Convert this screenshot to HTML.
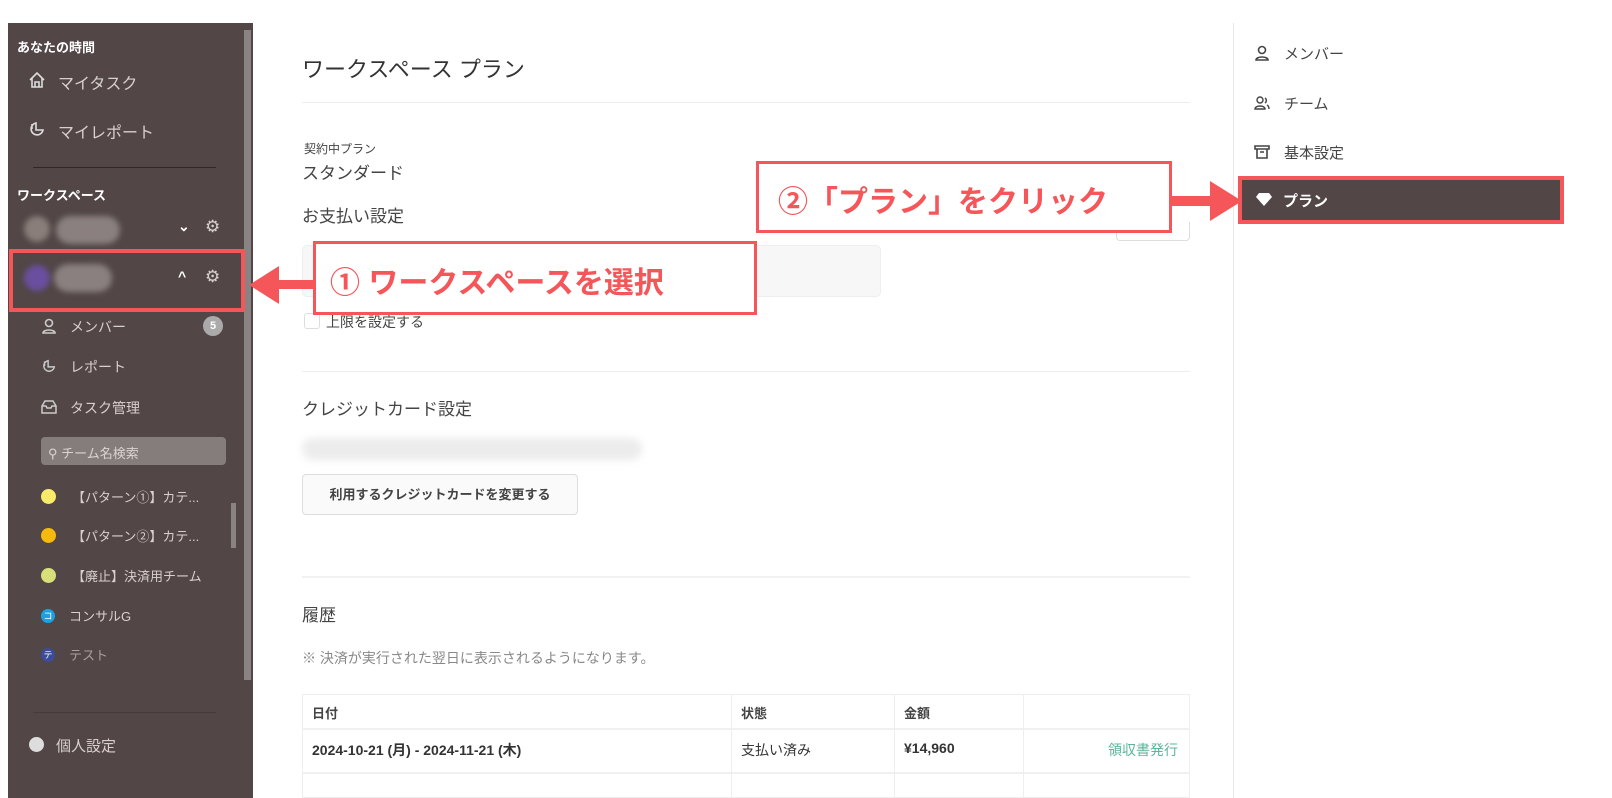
<!DOCTYPE html>
<html><head><meta charset="utf-8"><style>
*{margin:0;padding:0;box-sizing:border-box}
body{width:1612px;height:798px;background:#fff;position:relative;overflow:hidden;font-family:"Liberation Sans","Noto Sans CJK JP",sans-serif;color:#333}
.a{position:absolute;white-space:nowrap}
#sb{position:absolute;left:8px;top:23px;width:245px;height:775px;background:#524646}
.sw{color:#fff}
.sl{color:#d8d0cf}
.red{border:4px solid #f5565a}
</style></head><body>
<div id="sb"></div>
<div class="a" style="left:244px;top:30px;width:7px;height:650px;background:#8a8383"></div>
<div class="a sw" style="left:17px;top:37px;font-size:13px;font-weight:bold">あなたの時間</div>
<svg class="a" style="left:28px;top:71px" width="18" height="18" viewBox="0 0 18 18" fill="none" stroke="#ddd" stroke-width="1.6"><path d="M2 9L9 2l7 7M4 7v9h10V7M7 16v-5h4v5"/></svg>
<div class="a sl" style="left:58px;top:70px;font-size:16px">マイタスク</div>
<svg class="a" style="left:28px;top:120px" width="18" height="18" viewBox="0 0 18 18" fill="none" stroke="#ddd" stroke-width="1.6"><path d="M8 3a6 6 0 1 0 7 7H8zM4 4v5"/></svg>
<div class="a sl" style="left:58px;top:119px;font-size:16px">マイレポート</div>
<div class="a" style="left:33px;top:167px;width:183px;height:1px;background:#2f2828"></div>
<div class="a sw" style="left:17px;top:185px;font-size:13px;font-weight:bold">ワークスペース</div>
<div class="a" style="left:24px;top:216px;width:26px;height:26px;border-radius:50%;background:#8a7e7a;filter:blur(3px)"></div>
<div class="a" style="left:56px;top:216px;width:64px;height:28px;border-radius:14px;background:#8a8080;filter:blur(3px)"></div>
<div class="a sw" style="left:178px;top:218px;font-size:14px;font-weight:bold">⌄</div>
<div class="a sl" style="left:205px;top:217px;font-size:17px">⚙</div>
<div class="a" style="left:24px;top:265px;width:26px;height:26px;border-radius:50%;background:#6a4fa0;filter:blur(3px)"></div>
<div class="a" style="left:54px;top:264px;width:58px;height:28px;border-radius:14px;background:#8a8080;filter:blur(3px)"></div>
<div class="a sw" style="left:178px;top:268px;font-size:14px;font-weight:bold">^</div>
<div class="a sl" style="left:205px;top:267px;font-size:17px">⚙</div>
<div class="a red" style="left:9px;top:249px;width:236px;height:63px"></div>
<svg class="a" style="left:41px;top:318px" width="16" height="16" viewBox="0 0 16 16" fill="none" stroke="#ccc" stroke-width="1.6"><circle cx="8" cy="5" r="3.5"/><path d="M2 15c0-4 12-4 12 0z"/></svg>
<div class="a sl" style="left:70px;top:317px;font-size:14px">メンバー</div>
<div class="a" style="left:203px;top:316px;width:20px;height:20px;border-radius:50%;background:#aaa;color:#fff;font-size:11px;font-weight:bold;text-align:center;line-height:20px">5</div>
<svg class="a" style="left:41px;top:358px" width="16" height="16" viewBox="0 0 18 18" fill="none" stroke="#ccc" stroke-width="1.6"><path d="M8 3a6 6 0 1 0 7 7H8zM4 4v5"/></svg>
<div class="a sl" style="left:70px;top:357px;font-size:14px">レポート</div>
<svg class="a" style="left:41px;top:400px" width="16" height="14" viewBox="0 0 16 14" fill="none" stroke="#ccc" stroke-width="1.5"><path d="M1 6l3-5h8l3 5v7H1zM1 6h4l1 2h4l1-2h4"/></svg>
<div class="a sl" style="left:70px;top:398px;font-size:14px">タスク管理</div>
<div class="a" style="left:41px;top:437px;width:185px;height:28px;border-radius:4px;background:#857d7c"></div>
<div class="a" style="left:48px;top:443px;font-size:13px;color:#d9d4d3">⚲ チーム名検索</div>
<div class="a" style="left:231px;top:503px;width:5px;height:45px;background:#8a8383"></div>
<div class="a" style="left:41px;top:489px;width:15px;height:15px;border-radius:50%;background:#f9ea6a"></div>
<div class="a sl" style="left:72px;top:487px;font-size:13px">【パターン①】カテ...</div>
<div class="a" style="left:41px;top:528px;width:15px;height:15px;border-radius:50%;background:#f6b90e"></div>
<div class="a sl" style="left:72px;top:526px;font-size:13px">【パターン②】カテ...</div>
<div class="a" style="left:41px;top:568px;width:15px;height:15px;border-radius:50%;background:#d9e07a"></div>
<div class="a sl" style="left:72px;top:566px;font-size:13px">【廃止】決済用チーム</div>
<div class="a" style="left:41px;top:609px;width:14px;height:14px;border-radius:50%;background:#1aa3e0;color:#fff;font-size:9px;text-align:center;line-height:14px">コ</div>
<div class="a sl" style="left:69px;top:606px;font-size:13px">コンサルG</div>
<div class="a" style="left:41px;top:648px;width:14px;height:14px;border-radius:50%;background:#3d4c9a;color:#fff;font-size:9px;text-align:center;line-height:14px">テ</div>
<div class="a" style="left:69px;top:645px;font-size:13px;color:#a8a0a0">テスト</div>
<div class="a" style="left:33px;top:712px;width:183px;height:1px;background:#443b3b"></div>
<div class="a" style="left:29px;top:737px;width:15px;height:15px;border-radius:50%;background:#ddd"></div>
<div class="a sl" style="left:56px;top:735px;font-size:15px">個人設定</div>

<div class="a" style="left:302px;top:52px;font-size:22px;color:#333">ワークスペース プラン</div>
<div class="a" style="left:302px;top:102px;width:888px;height:1px;background:#eee"></div>
<div class="a" style="left:304px;top:140px;font-size:12px;color:#444">契約中プラン</div>
<div class="a" style="left:302px;top:159px;font-size:17px;color:#444">スタンダード</div>
<div class="a" style="left:302px;top:202px;font-size:17px;color:#444">お支払い設定</div>
<div class="a" style="left:302px;top:245px;width:579px;height:52px;border-radius:5px;background:#f7f7f7;border:1px solid #eee"></div>
<div class="a" style="left:1116px;top:222px;width:74px;height:19px;border:1px solid #ddd;border-top:none;border-radius:0 0 4px 4px"></div>
<div class="a" style="left:304px;top:313px;width:16px;height:16px;border:1px solid #ddd;border-radius:3px"></div>
<div class="a" style="left:326px;top:312px;font-size:14px;color:#444">上限を設定する</div>
<div class="a" style="left:302px;top:371px;width:888px;height:1px;background:#eee"></div>
<div class="a" style="left:302px;top:395px;font-size:17px;color:#444">クレジットカード設定</div>
<div class="a" style="left:302px;top:438px;width:340px;height:22px;border-radius:11px;background:#ececec;filter:blur(4px)"></div>
<div class="a" style="left:302px;top:474px;width:276px;height:41px;border:1px solid #ddd;border-radius:4px;background:#fafafa;font-size:13px;font-weight:bold;color:#444;text-align:center;line-height:39px">利用するクレジットカードを変更する</div>
<div class="a" style="left:302px;top:576px;width:888px;height:2px;background:#f2f2f2"></div>
<div class="a" style="left:302px;top:601px;font-size:17px;color:#444">履歴</div>
<div class="a" style="left:302px;top:648px;font-size:14px;color:#888">※ 決済が実行された翌日に表示されるようになります。</div>
<div class="a" style="left:302px;top:694px;width:888px;height:104px;border:1px solid #eee"></div>
<div class="a" style="left:302px;top:728px;width:888px;height:2px;background:#f0f0f0"></div>
<div class="a" style="left:302px;top:772px;width:888px;height:2px;background:#f0f0f0"></div>
<div class="a" style="left:552px;top:694px;width:1px;height:104px;background:#eee;left:552px;display:none"></div>
<div class="a" style="left:552px;left:552px"></div>
<div class="a" style="left:731px;top:694px;width:1px;height:104px;background:#eee"></div>
<div class="a" style="left:894px;top:694px;width:1px;height:104px;background:#eee"></div>
<div class="a" style="left:1023px;top:694px;width:1px;height:104px;background:#eee"></div>
<div class="a" style="left:312px;top:703px;font-size:13px;font-weight:bold;color:#444">日付</div>
<div class="a" style="left:741px;top:703px;font-size:13px;font-weight:bold;color:#444">状態</div>
<div class="a" style="left:904px;top:703px;font-size:13px;font-weight:bold;color:#444">金額</div>
<div class="a" style="left:312px;top:740px;font-size:14px;font-weight:bold;color:#333">2024-10-21 (月) - 2024-11-21 (木)</div>
<div class="a" style="left:741px;top:740px;font-size:14px;color:#333">支払い済み</div>
<div class="a" style="left:904px;top:740px;font-size:14px;font-weight:bold;color:#333">¥14,960</div>
<div class="a" style="left:1108px;top:740px;font-size:14px;color:#5bb59a">領収書発行</div>

<div class="a" style="left:1233px;top:23px;width:1px;height:775px;background:#e8e8e8"></div>
<svg class="a" style="left:1254px;top:45px" width="16" height="16" viewBox="0 0 16 16" fill="none" stroke="#444" stroke-width="1.6"><circle cx="8" cy="5" r="3.5"/><path d="M2 15c0-4 12-4 12 0z"/></svg>
<div class="a" style="left:1284px;top:43px;font-size:15px;color:#444">メンバー</div>
<svg class="a" style="left:1254px;top:96px" width="16" height="14" viewBox="0 0 16 14" fill="none" stroke="#444" stroke-width="1.4"><circle cx="6" cy="4" r="3"/><path d="M1 13c0-4 10-4 10 0zM11 2a3 3 0 0 1 0 5M13 9c2 1 2 3 2 4"/></svg>
<div class="a" style="left:1284px;top:93px;font-size:15px;color:#444">チーム</div>
<svg class="a" style="left:1254px;top:144px" width="16" height="16" viewBox="0 0 16 16" fill="none" stroke="#444" stroke-width="1.6"><path d="M1 2h14v3H1zM3 5v9h10V5M6 8h4"/></svg>
<div class="a" style="left:1284px;top:142px;font-size:15px;color:#444">基本設定</div>
<div class="a" style="left:1238px;top:176px;width:326px;height:48px;border:4px solid #f5565a;background:#524646"></div>
<svg class="a" style="left:1256px;top:193px" width="16" height="13" viewBox="0 0 16 13" fill="#fff"><path d="M3 0h10l3 4-8 9-8-9z"/></svg>
<div class="a" style="left:1283px;top:190px;font-size:15px;font-weight:bold;color:#fff">プラン</div>

<!-- arrows -->
<div class="a" style="left:270px;top:280px;width:50px;height:9px;background:#f5565a"></div>
<svg class="a" style="left:249px;top:266px" width="30" height="38" viewBox="0 0 30 38"><path d="M0 19L30 0v38z" fill="#f5565a"/></svg>
<div class="a" style="left:1170px;top:196px;width:50px;height:10px;background:#f5565a"></div>
<svg class="a" style="left:1210px;top:181px" width="32" height="40" viewBox="0 0 32 40"><path d="M32 20L0 0v40z" fill="#f5565a"/></svg>

<div class="a" style="left:313px;top:241px;width:444px;height:74px;border:3px solid #f5565a;background:#fff"></div>
<div class="a" style="left:330px;top:258px;font-size:30px;font-weight:bold;color:#f5565a">① ワークスペースを選択</div>
<div class="a" style="left:756px;top:161px;width:416px;height:72px;border:3px solid #f5565a;background:#fff"></div>
<div class="a" style="left:778px;top:177px;font-size:30px;font-weight:bold;color:#f5565a">②「プラン」をクリック</div>
</body></html>
